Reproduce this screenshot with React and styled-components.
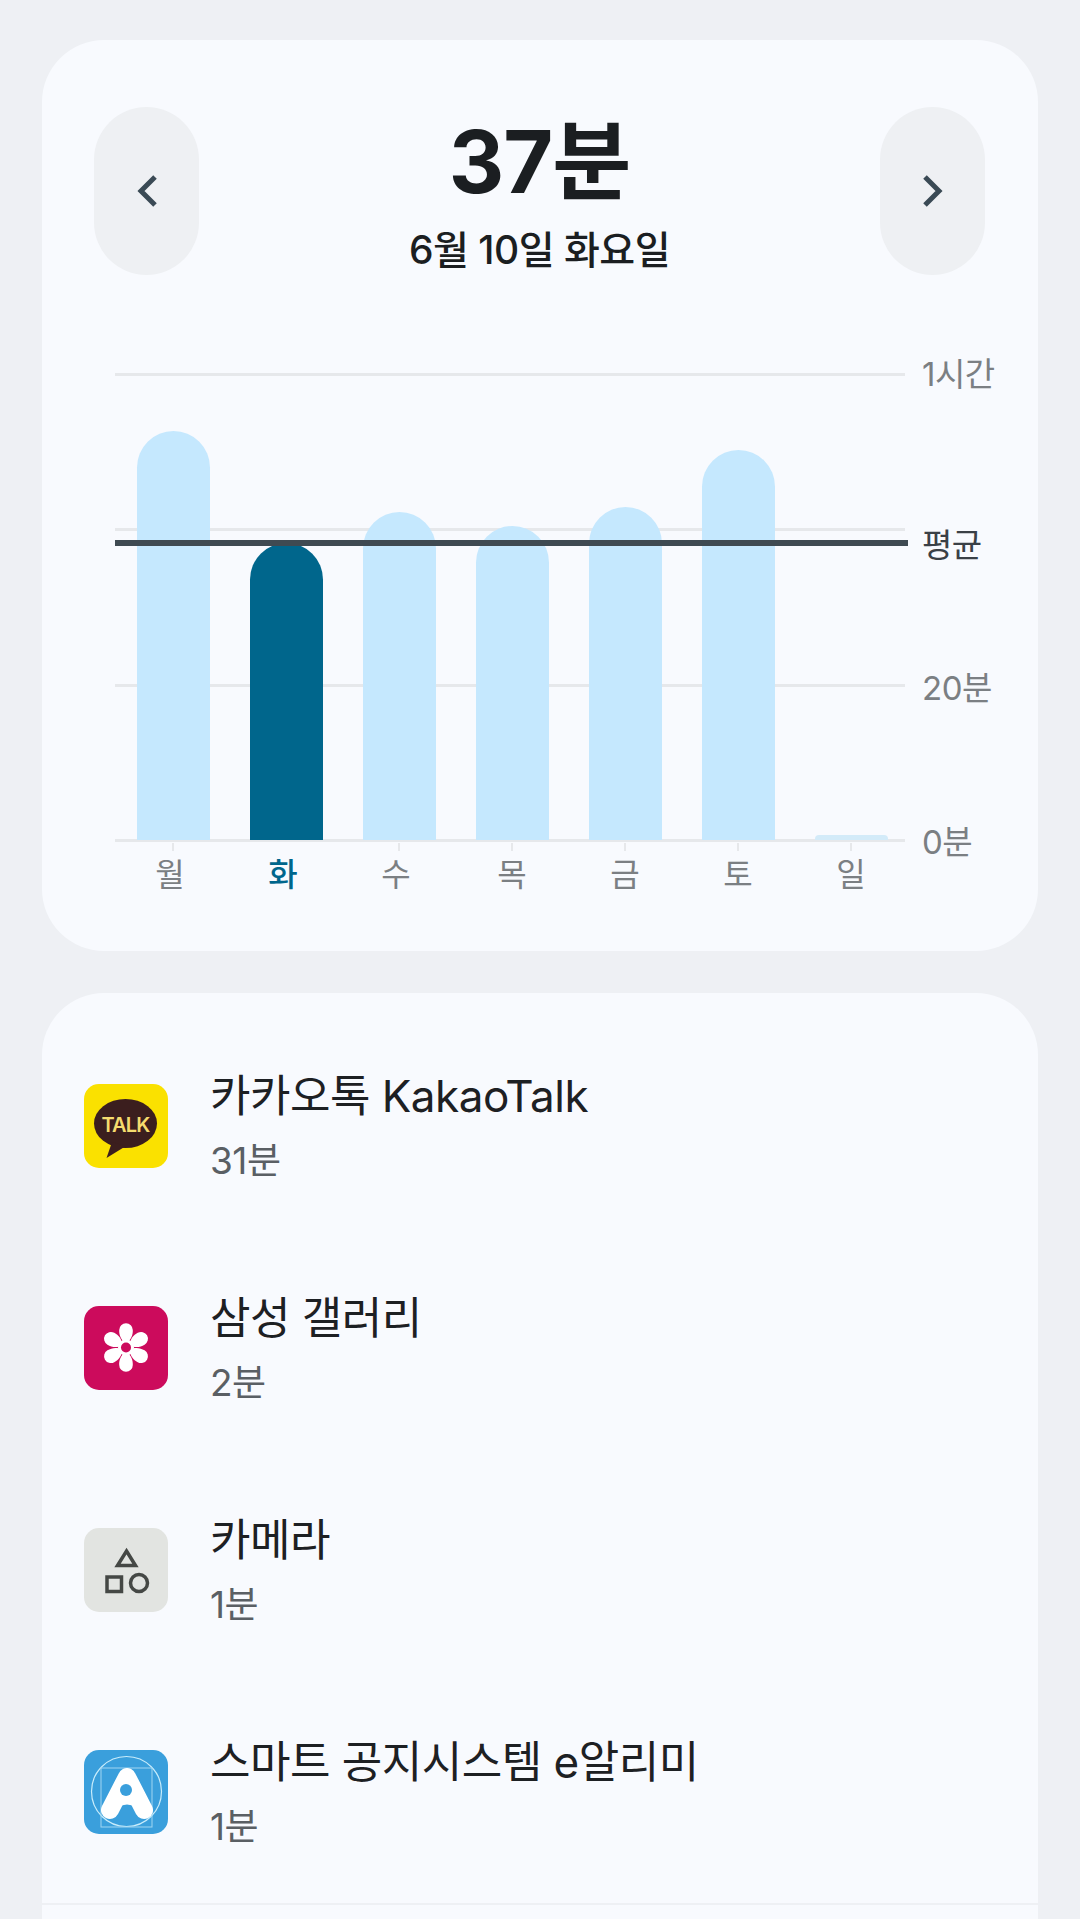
import React from 'react';
import styled, { createGlobalStyle } from 'styled-components';

const Global = createGlobalStyle`
  html, body { margin: 0; padding: 0; height: 1919px; overflow: hidden; background: #eef0f4; }
  body { font-family: "Inter", "Noto Sans CJK KR", sans-serif; }
`;

const Page = styled.div`
  width: 1080px;
  height: 1919px;
  overflow: hidden;
  padding: 40px 42px 0;
  box-sizing: border-box;
  display: flex;
  flex-direction: column;
  gap: 42px;
`;

const Card = styled.section`
  background: #f8fafe;
  border-radius: 62px;
  flex: ${p => (p.$grow ? 1 : 'none')};
  box-sizing: border-box;
`;

const SummaryCard = styled(Card)`
  height: 911px;
  padding: 67px 53px 0 52px;
`;

const Header = styled.div`
  display: flex;
  justify-content: space-between;
  align-items: center;
  height: 168px;
`;

const NavButton = styled.div`
  width: 105px;
  height: 168px;
  border-radius: 53px;
  background: #eef0f3;
  display: flex;
  align-items: center;
  justify-content: center;
`;

const Heading = styled.div`
  display: flex;
  flex-direction: column;
  align-items: center;
  margin-top: 6px;
`;

const Total = styled.div`
  font-size: 86px;
  line-height: 100px;
  font-weight: 700;
  color: #1b1e21;
  letter-spacing: -1px;
`;

const DateLine = styled.div`
  margin-top: 12px;
  font-size: 39px;
  line-height: 52px;
  font-weight: 500;
  color: #1b1e21;
  letter-spacing: -0.5px;
`;

const Chart = styled.div`
  position: relative;
  margin: 98px 0 0 21px;
  width: 790px;
  height: 467px;
`;

const GridLine = styled.div`
  position: absolute;
  left: 0;
  right: 0;
  height: 3px;
  background: #e6e8eb;
  top: ${p => p.$y}px;
`;

const AverageLine = styled.div`
  position: absolute;
  left: 0;
  right: -3px;
  height: 6px;
  background: #3f4a52;
  top: 167px;
  z-index: 2;
`;

const AxisLabel = styled.div`
  position: absolute;
  left: 807px;
  top: ${p => p.$y}px;
  transform: translateY(-50%);
  font-size: 33px;
  line-height: 40px;
  white-space: nowrap;
  letter-spacing: -0.5px;
  color: ${p => (p.$dark ? '#3a4046' : '#7b7f83')};
`;

const Bars = styled.div`
  position: absolute;
  left: 21.5px;
  bottom: 0;
  height: 100%;
  display: flex;
  align-items: flex-end;
  gap: 40px;
`;

const Bar = styled.div`
  width: 73px;
  border-radius: 37px 37px 0 0;
  background: ${p => (p.$active ? '#00668c' : '#c5e8fe')};
`;

const StubBar = styled.div`
  width: 73px;
  height: 5px;
  border-radius: 4px 4px 0 0;
  background: #d3ebf9;
`;

const Days = styled.div`
  display: flex;
  gap: 40px;
  margin: 3px 0 0 42.5px;
`;

const Day = styled.div`
  width: 73px;
  box-sizing: border-box;
  position: relative;
  padding-top: 11px;
  padding-right: ${p => p.$nudge || 0}px;
  text-align: center;
  font-size: 32px;
  line-height: 42px;
  color: ${p => (p.$active ? '#00668c' : '#7b7f83')};
  font-weight: ${p => (p.$active ? 500 : 400)};
`;

const Tick = styled.span`
  position: absolute;
  top: 0;
  left: 50%;
  width: 2px;
  height: 8px;
  margin-left: -1px;
  background: #e6e8eb;
`;

const ListCard = styled(Card)`
  border-radius: 62px 62px 0 0;
  padding-top: 22px;
`;

const Row = styled.div`
  display: flex;
  align-items: center;
  height: 222px;
  padding-left: 42px;
  gap: 42px;
`;

const Divider = styled.div`
  height: 2px;
  background: #eef0f4;
`;

const AppIcon = styled.div`
  width: 84px;
  height: 84px;
  border-radius: 15px;
  background: ${p => p.$bg};
  flex: none;
  display: flex;
  align-items: center;
  justify-content: center;
  overflow: hidden;
`;

const RowText = styled.div`
  display: flex;
  flex-direction: column;
  gap: 16px;
  margin-top: 2px;
`;

const AppName = styled.div`
  font-size: 44px;
  line-height: 52px;
  color: #1d2023;
  letter-spacing: -0.5px;
`;

const AppTime = styled.div`
  font-size: 37px;
  line-height: 46px;
  color: #5a5f64;
  letter-spacing: -0.5px;
`;

const Chevron = ({ dir }) => (
  <svg width="24" height="34" viewBox="0 0 24 34" fill="none">
    <path
      d={dir === 'left' ? 'M20 3 L6 17 L20 31' : 'M4 3 L18 17 L4 31'}
      stroke="#3a4a55"
      strokeWidth="5"
    />
  </svg>
);

const TalkIcon = () => (
  <svg width="84" height="84" viewBox="0 0 84 84">
    <ellipse cx="41.5" cy="39.5" rx="31.5" ry="24.5" fill="#3b1e1e" />
    <path d="M28 58 L22.5 74 L42 62 Z" fill="#3b1e1e" strokeLinejoin="round" />
    <text x="41.5" y="47.5" textAnchor="middle" fontFamily="Inter, sans-serif" fontWeight="600" fontSize="20" letterSpacing="-0.8" fill="#f5dc6e">TALK</text>
  </svg>
);

const FlowerIcon = () => (
  <svg width="84" height="84" viewBox="0 0 84 84">
    {[0, 60, 120, 180, 240, 300].map(a => (
      <path
        key={a}
        d="M42 38 C36.5 33 35 29 35.2 24 A6.8 6.8 0 0 1 48.8 24 C49 29 47.5 33 42 38 Z"
        fill="#fff"
        transform={`rotate(${a} 42 41.5)`}
      />
    ))}
    <circle cx="42" cy="41.5" r="8" fill="#fff" />
    <circle cx="42" cy="41.5" r="5" fill="#cc0b5c" />
  </svg>
);

const ShapesIcon = () => (
  <svg width="84" height="84" viewBox="0 0 84 84" fill="none" stroke="#454845" strokeWidth="3.5">
    <path d="M42.5 23 L51.5 37.5 H33.5 Z" />
    <rect x="23" y="49" width="14.5" height="14.5" />
    <circle cx="55" cy="55" r="8.5" />
  </svg>
);

const AlertIcon = () => (
  <svg width="84" height="84" viewBox="0 0 84 84" fill="none">
    <circle cx="42.5" cy="41.5" r="35" stroke="#c8ecfb" strokeWidth="1.2" />
    <rect x="17" y="18" width="51" height="59" stroke="#9fd6f2" strokeWidth="1" />
    <path d="M43 27 L60 60 M43 27 L26 60" stroke="#fff" strokeWidth="18" strokeLinecap="round" />
    <path d="M31 58 Q43 51 55 58 L43 30 Z" fill="#fff" />
    <circle cx="42" cy="40" r="6" fill="#3a9fdc" />
  </svg>
);

const bars = [
  { day: '월', height: 409, nudge: 6 },
  { day: '화', height: 297, active: true, nudge: 6 },
  { day: '수', height: 328, nudge: 6 },
  { day: '목', height: 314 },
  { day: '금', height: 333 },
  { day: '토', height: 390 },
];

const apps = [
  { name: '카카오톡 KakaoTalk', time: '31분', bg: '#fae100', icon: <TalkIcon /> },
  { name: '삼성 갤러리', time: '2분', bg: '#cc0b5c', icon: <FlowerIcon /> },
  { name: '카메라', time: '1분', bg: '#e2e4e1', icon: <ShapesIcon /> },
  { name: '스마트 공지시스템 e알리미', time: '1분', bg: '#3a9fdc', icon: <AlertIcon /> },
];

export default function App() {
  return (
    <Page>
      <Global />
      <SummaryCard>
        <Header>
          <NavButton><Chevron dir="left" /></NavButton>
          <Heading>
            <Total>37분</Total>
            <DateLine>6월 10일 화요일</DateLine>
          </Heading>
          <NavButton><Chevron dir="right" /></NavButton>
        </Header>
        <Chart>
          <GridLine $y={0} />
          <GridLine $y={155} />
          <GridLine $y={311} />
          <GridLine $y={466} />
          <Bars>
            {bars.map(b => (
              <Bar key={b.day} $active={b.active} style={{ height: b.height }} />
            ))}
            <StubBar />
          </Bars>
          <AverageLine />
          <AxisLabel $y={1}>1시간</AxisLabel>
          <AxisLabel $y={172} $dark>평균</AxisLabel>
          <AxisLabel $y={315}>20분</AxisLabel>
          <AxisLabel $y={469}>0분</AxisLabel>
        </Chart>
        <Days>
          {[...bars, { day: '일' }].map(b => (
            <Day key={b.day} $active={b.active} $nudge={b.nudge}>
              {!b.active && <Tick />}
              {b.day}
            </Day>
          ))}
        </Days>
      </SummaryCard>
      <ListCard $grow>
        {apps.map(a => (
          <Row key={a.name}>
            <AppIcon $bg={a.bg}>{a.icon}</AppIcon>
            <RowText>
              <AppName>{a.name}</AppName>
              <AppTime>{a.time}</AppTime>
            </RowText>
          </Row>
        ))}
        <Divider />
      </ListCard>
    </Page>
  );
}
